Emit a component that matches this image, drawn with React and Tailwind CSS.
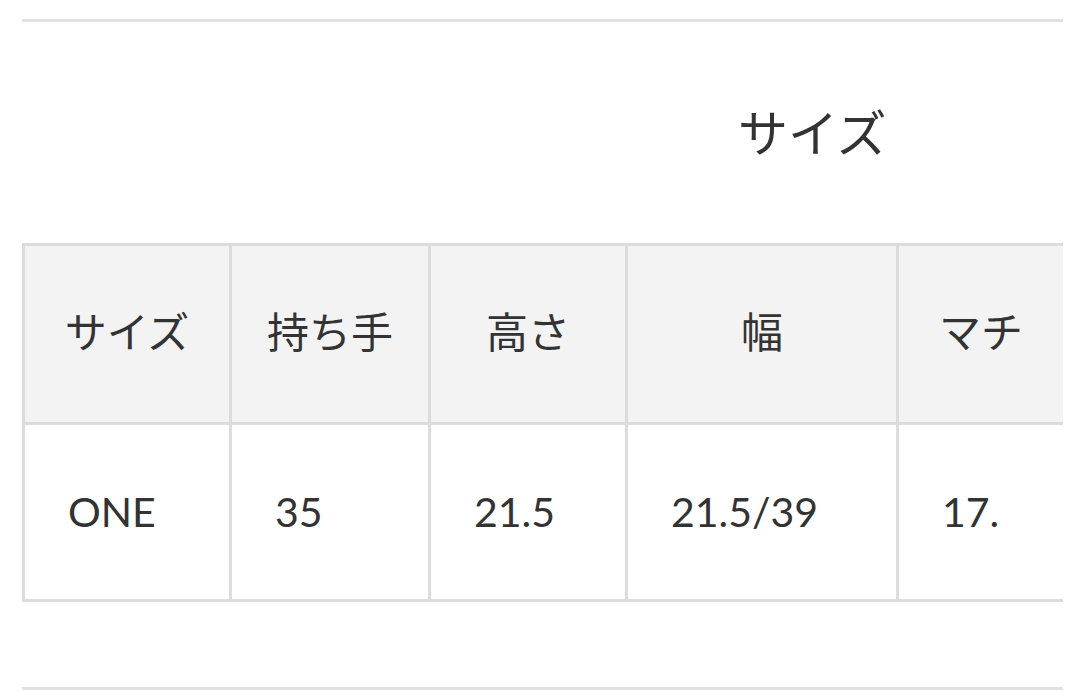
const headers = ['サイズ', '持ち手', '高さ', '幅', 'マチ'];
const values = ['ONE', '35', '21.5', '21.5/39', '17.'];
const colWidths = ['w-[204px]', 'w-[196px]', 'w-[194px]', 'w-[268px]', 'w-[164px]'];

export default function App() {
  return (
    <div className="w-[1080px] h-[692px] bg-white pl-[22px] pr-[17px] pt-[19px] text-[#333]" style={{ fontFamily: 'Lato, "Noto Sans CJK JP", sans-serif' }}>
      <div className="overflow-hidden">
        <div className="border-t-[3px] border-[#e2e2e2]" />

        {/* section title */}
        <div className="pl-[716px] pt-[83px] h-[221px]">
          <h2 className="text-[50px] leading-none" style={{ fontFamily: '"Noto Sans CJK JP", sans-serif' }}>サイズ</h2>
        </div>

        <div className="inline-flex flex-col bg-[#dcdcdc] p-[3px] gap-[3px] w-max">
          <div className="flex gap-[3px]">
            {headers.map((h, i) => (
              <div key={h} className={`${colWidths[i]} h-[176px] bg-[#f3f3f3] flex items-center justify-center pb-[10px] text-[42px]`} style={{ fontFamily: '"Noto Sans CJK JP", sans-serif' }}>
                {h}
              </div>
            ))}
          </div>
          <div className="flex gap-[3px]">
            {values.map((v, i) => (
              <div key={i} className={`${colWidths[i]} h-[174px] bg-white flex items-center pl-[43px] text-[41px]`}>
                {v}
              </div>
            ))}
          </div>
        </div>

        <div className="mt-[85px] border-t-[3px] border-[#e2e2e2]" />
      </div>
    </div>
  );
}
